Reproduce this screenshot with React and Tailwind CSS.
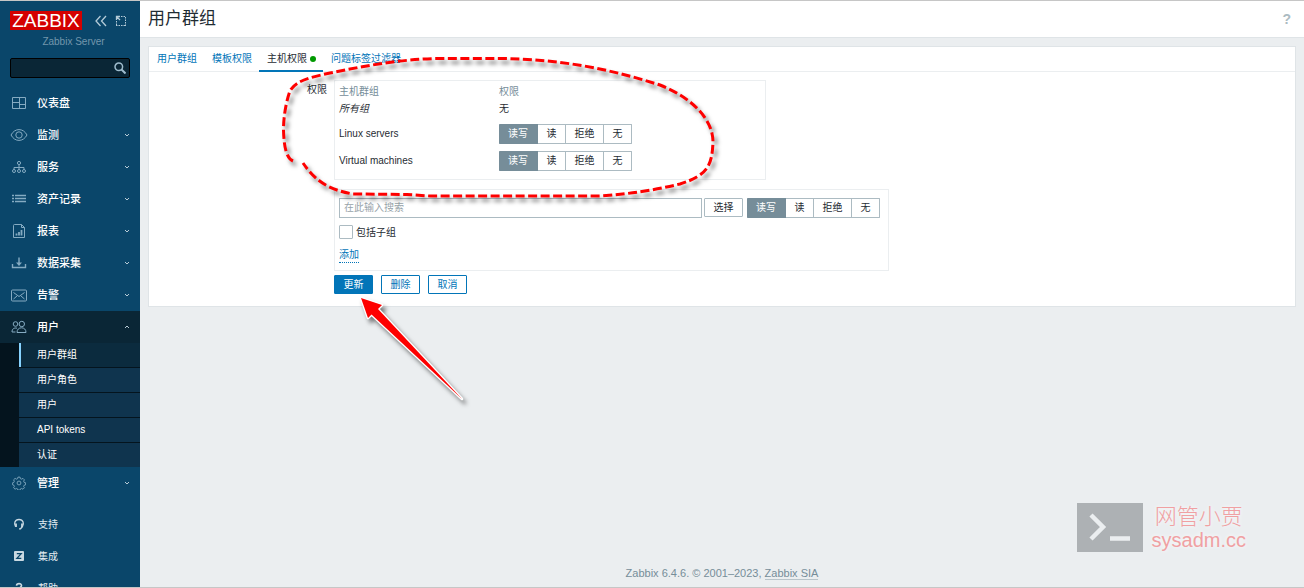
import React from "react";

const stroke = { fill: "none", stroke: "currentColor", strokeWidth: 1 };

function DashboardIcon() {
  return (
    <svg width="16" height="16" viewBox="0 0 16 16" {...stroke}>
      <path d="M1.500 2.500h13v11h-13zM8.500 2.500v11M1.500 7.500h7M8.500 9.500h6" />
    </svg>
  );
}
function EyeIcon() {
  return (
    <svg width="18" height="16" viewBox="0 0 18 16" {...stroke}>
      <path d="M1 8c2-3.600 4.800-5.400 8-5.400S15 4.400 17 8c-2 3.600-4.800 5.400-8 5.400S3 11.600 1 8z" />
      <circle cx="9" cy="8" r="3.200" />
    </svg>
  );
}
function ServicesIcon() {
  return (
    <svg width="16" height="16" viewBox="0 0 16 16" {...stroke}>
      <circle cx="8" cy="4" r="1.600" />
      <circle cx="3" cy="12" r="1.500" />
      <circle cx="8" cy="12" r="1.500" />
      <circle cx="13" cy="12" r="1.500" />
      <path d="M8 5.600v4.900M3 10.500V8.500h10v2" />
    </svg>
  );
}
function ListIcon() {
  return (
    <svg width="16" height="16" viewBox="0 0 16 16" {...stroke}>
      <path d="M1 4.500h2M4 4.500h11M1 7.500h2M4 7.500h11M1 10.500h2M4 10.500h11" strokeWidth="1.300" />
    </svg>
  );
}
function ReportIcon() {
  return (
    <svg width="16" height="16" viewBox="0 0 16 16" {...stroke}>
      <path d="M3.500 1.500h7l3 3v10h-11v-12a1 1 0 0 1 1-1zM10.500 1.500v3h3" />
      <path d="M5.500 12.500v-2M8 12.500V9M10.500 12.500V7" strokeWidth="1.800" />
    </svg>
  );
}
function DownloadIcon() {
  return (
    <svg width="16" height="16" viewBox="0 0 16 16" {...stroke} strokeWidth="1.400">
      <path d="M8 2.500v7M1.500 9v3.500h13V9" />
      <path d="M5 7.500h6L8 11z" fill="currentColor" stroke="none" />
    </svg>
  );
}
function MailIcon() {
  return (
    <svg width="16" height="16" viewBox="0 0 16 16" {...stroke}>
      <rect x="0.500" y="3" width="15" height="11" rx="1" />
      <path d="M2.500 5.500L8 9.500l5.500-4M2.500 12l3.500-3M13.500 12L10 9" />
    </svg>
  );
}
function UsersIcon() {
  return (
    <svg width="16" height="16" viewBox="0 0 16 16" {...stroke}>
      <circle cx="4.500" cy="5" r="2.300" />
      <circle cx="10.800" cy="5" r="2.700" />
      <path d="M6 13.500c0-3 1.800-4.700 4.500-4.700s4.500 1.700 4.500 4.700zM6 9.200c-3-.8-5 .8-5 3.800h3.500" />
    </svg>
  );
}
function GearIcon() {
  return (
    <svg width="14" height="14" viewBox="0 0 16 16" {...stroke}>
      <circle cx="8" cy="8" r="2.200" />
      <path d="M6.800 1.300h2.400l.4 1.700 1.400.6 1.500-.9 1.700 1.700-.9 1.500.6 1.400 1.600.4v2.400l-1.600.4-.6 1.400.9 1.500-1.700 1.700-1.500-.9-1.400.6-.4 1.400H6.800l-.4-1.400-1.400-.6-1.500.9-1.700-1.700.9-1.500-.6-1.400-1.400-.4V7.700l1.400-.4.600-1.400-.9-1.500 1.700-1.700 1.500.9 1.400-.6z" />
    </svg>
  );
}
function HeadsetIcon() {
  return (
    <svg width="12" height="12" viewBox="0 0 12 12" fill="none" stroke="currentColor" strokeWidth="1.300">
      <path d="M2.500 8.500C.8 6 1.500 1.500 6 1.500s5.200 4.500 3.500 7L7.500 10.800H6" />
      <path d="M3 5.500v3.500M9 5.500v3.500" strokeWidth="1.800" />
    </svg>
  );
}
function IntegrationIcon() {
  return (
    <svg width="12" height="12" viewBox="0 0 12 12">
      <rect x="1" y="1" width="10" height="10" rx="1" fill="currentColor" />
      <path d="M3.800 3.600h4.400L3.900 8.400h4.400" fill="none" stroke="#0a466a" strokeWidth="1.300" />
    </svg>
  );
}
function HelpIcon() {
  return (
    <svg width="12" height="12" viewBox="0 0 12 12" fill="none" stroke="currentColor" strokeWidth="1.600">
      <path d="M3.500 3.600C3.700 1 8.600 1 8.500 3.600 8.400 5.400 6 5.300 6 7.500M6 9v1.800" />
    </svg>
  );
}
function Chevron({ up }) {
  return (
    <svg className="ml-auto" width="6" height="6" viewBox="0 0 6 6" fill="none" stroke="#b9ccd7" strokeWidth="1">
      <path d={up ? "M1 4l2-2 2 2" : "M1 2l2 2 2-2"} />
    </svg>
  );
}

const menu = [
  ["仪表盘", DashboardIcon, false],
  ["监测", EyeIcon, true],
  ["服务", ServicesIcon, true],
  ["资产记录", ListIcon, true],
  ["报表", ReportIcon, true],
  ["数据采集", DownloadIcon, true],
  ["告警", MailIcon, true],
];
const submenu = ["用户群组", "用户角色", "用户", "API tokens", "认证"];
const support = [
  ["支持", HeadsetIcon],
  ["集成", IntegrationIcon],
  ["帮助", HelpIcon],
];

function MenuLink({ label, Icon, expandable, open }) {
  return (
    <a
      href="#"
      className={
        "flex h-8 shrink-0 items-center px-[10px] text-[11px] font-medium text-white " + (open ? "bg-[#0a2636]" : "")
      }
    >
      <span className="flex w-[27px] shrink-0">
        <span className="flex w-[18px] justify-center text-[#85abc2]">
          <Icon />
        </span>
      </span>
      {label}
      {expandable && <Chevron up={open} />}
    </a>
  );
}

function Sidebar() {
  return (
    <aside className="flex w-[140px] shrink-0 flex-col overflow-hidden bg-[#0a466a]">
      <div className="flex shrink-0 items-center px-[10px] pt-[10px]">
        <a href="#" className="flex h-[19px] w-[72px] items-center justify-center bg-[#d40000] text-[19px] leading-none text-white">
          ZABBIX
        </a>
        <button type="button" aria-label="收起侧边栏" className="ml-3 text-[#b4cbd8]">
          <svg width="14" height="12" viewBox="0 0 14 12" fill="none" stroke="currentColor" strokeWidth="1.300">
            <path d="M6.500 1L2 6l4.500 5M12 1L7.500 6l4.500 5" />
          </svg>
        </button>
        <button type="button" aria-label="隐藏侧边栏" className="ml-[7px] text-[#b4cbd8]">
          <svg width="12" height="12" viewBox="0 0 12 12" fill="none" stroke="currentColor">
            <path d="M6 1.500h5M10.500 2v9M1.500 6v5M1 10.500h10" strokeDasharray="1.500 1" />
            <path d="M1.500 5V1.500H5M1.500 1.500L5 5" strokeWidth="1.300" />
          </svg>
        </button>
      </div>
      <div className="mt-1 shrink-0 pl-[7px] text-center text-[10px] leading-4 text-[#7396ac]">Zabbix Server</div>
      <label className="mx-[10px] mt-2 flex h-5 shrink-0 items-center rounded-[2px] border border-black bg-[#0a2636]">
        <input type="text" aria-label="搜索" className="min-w-0 flex-1 bg-transparent px-1 text-[10px] text-white outline-none" />
        <svg className="mr-[3px]" width="12" height="12" viewBox="0 0 12 12" fill="none" stroke="#9fbccd" strokeWidth="1.500">
          <circle cx="4.800" cy="4.800" r="3.800" />
          <path d="M7.500 7.500l4 4" strokeWidth="2" />
        </svg>
      </label>
      <nav className="mt-[9px] flex shrink-0 flex-col">
        {menu.map(([label, Icon, expandable]) => (
          <MenuLink key={label} label={label} Icon={Icon} expandable={expandable} />
        ))}
        <MenuLink label="用户" Icon={UsersIcon} expandable open />
        <div className="divide-y divide-[#04141e] bg-[#0f344e]">
          {submenu.map((label, i) => (
            <div key={label} className="flex">
              <span className="w-[19px] bg-[#04141e]" />
              <a
                href="#"
                className={
                  "flex h-6 flex-1 items-center border-l-2 pb-px pl-4 text-[10px] text-white " +
                  (i === 0 ? "border-[#87d3ff] bg-[#0b2b3e]" : "border-[#0f344e]")
                }
              >
                {label}
              </a>
            </div>
          ))}
        </div>
        <MenuLink label="管理" Icon={GearIcon} expandable />
      </nav>
      <nav className="mt-[9px] flex shrink-0 flex-col">
        {support.map(([label, Icon]) => (
          <a key={label} href="#" className="flex h-8 items-center pl-[13px] text-[10px] text-[#e3edf2]">
            <span className="w-[25px] text-[#c9d9e2]">
              <Icon />
            </span>
            {label}
          </a>
        ))}
      </nav>
    </aside>
  );
}

const levels = [
  ["读写", "w-[39px]"],
  ["读", "w-[28px]"],
  ["拒绝", "w-[38px]"],
  ["无", "w-[28px]"],
];

function AccessLevel({ name, label }) {
  return (
    <fieldset aria-label={label} className="flex h-5">
      {levels.map(([text, width], i) => (
        <label
          key={text}
          className={
            "relative flex items-center justify-center border-y border-r border-[#acbbc2] bg-white pb-px text-[#1f2c33] first:rounded-l-[1px] last:rounded-r-[1px] has-checked:border-[#768d99] has-checked:bg-[#768d99] has-checked:text-white " +
            width
          }
        >
          <input type="radio" name={name} defaultChecked={i === 0} className="sr-only" />
          {text}
        </label>
      ))}
    </fieldset>
  );
}

function HostPermissions() {
  return (
    <form className="flex pt-2 pb-3" onSubmit={(e) => e.preventDefault()}>
      <div className="w-[178px] shrink-0 pt-[2px] text-right leading-4">权限</div>
      <div className="ml-[7px] flex min-w-0 flex-col items-start">
        <div className="w-[432px] border border-[#ebeef0] px-1 pt-[2px] pb-[5px]">
          <table className="border-collapse">
            <thead>
              <tr className="h-[17px] text-left text-[#768d99]">
                <th className="w-[160px] p-0 font-normal">主机群组</th>
                <th className="p-0 font-normal">权限</th>
              </tr>
            </thead>
            <tbody>
              <tr className="h-5 align-top leading-[18px]">
                <td className="p-0 italic">所有组</td>
                <td className="p-0">无</td>
              </tr>
              {["Linux servers", "Virtual machines"].map((group) => (
                <tr key={group} className="h-[27px]">
                  <td className="p-0">{group}</td>
                  <td className="p-0">
                    <AccessLevel name={group} label={group} />
                  </td>
                </tr>
              ))}
            </tbody>
          </table>
        </div>
        <div className="mt-[9px] flex w-[555px] flex-col items-start border border-[#ebeef0] px-1 pt-2 pb-[7px]">
          <div className="flex w-full items-start">
            <input
              type="text"
              aria-label="主机群组"
              placeholder="在此输入搜索"
              className="h-5 w-[363px] border border-[#acbbc2] px-1 pb-[2px] outline-none placeholder:text-[#97a3a9]"
            />
            <button type="button" className="ml-[2px] h-[19px] w-[39px] rounded-[1px] border border-[#acbbc2]">
              选择
            </button>
            <div className="ml-1">
              <AccessLevel name="new-group" label="权限" />
            </div>
          </div>
          <label className="mt-[6px] flex h-4 items-center gap-[3px]">
            <input type="checkbox" className="size-[14px] appearance-none rounded-[1px] border border-[#acbbc2] bg-white" />
            包括子组
          </label>
          <button type="button" className="mt-2 border-b border-dotted border-[#0275b8] leading-[14px] text-[#0275b8]">
            添加
          </button>
        </div>
        <div className="mt-1 flex gap-2">
          <button type="submit" className="h-[19px] w-[39px] rounded-[1px] border border-[#0275b8] bg-[#0275b8] text-white">
            更新
          </button>
          <button type="button" className="h-[19px] w-[39px] rounded-[1px] border border-[#0275b8] text-[#0275b8]">
            删除
          </button>
          <button type="button" className="h-[19px] w-[39px] rounded-[1px] border border-[#0275b8] text-[#0275b8]">
            取消
          </button>
        </div>
      </div>
    </form>
  );
}

function Annotations() {
  return (
    <svg
      className="pointer-events-none absolute top-0 left-0 drop-shadow-[3px_4px_2px_rgba(0,0,0,0.5)]"
      width="760"
      height="420"
      viewBox="0 1 760 420"
      aria-hidden="true"
    >
      <path
        d="M293 161C286 158 284 146 283.500 130C283.500 112 288 96 290 91C296 80 312 77 330 73C365 66 400 59 440 58.500L500 58.500C560 59 610 69 660 85C690 97 713 118 713 142C712 164 709 175 680 184C655 190 630 194 600 196L430 196L407 194.500L353 194C330 190 316 182 303 163"
        fill="none"
        stroke="#fe0000"
        strokeWidth="3"
        strokeDasharray="9 3.500"
      />
      <path
        d="M361 298L382 305 378 309 462 399 371.500 314.500 368 318z"
        fill="#fe0000"
        stroke="#fff"
        strokeWidth="2.600"
        strokeLinejoin="round"
        paintOrder="stroke"
      />
    </svg>
  );
}

function Watermark() {
  return (
    <div className="pointer-events-none absolute right-[58px] bottom-[35px] flex items-center gap-[9px]">
      <svg width="66" height="49" viewBox="0 0 66 49" aria-hidden="true">
        <path d="M0 0h66v49H0z" fill="#adb1b4" />
        <path d="M14 12l12 12-12 12M33 35.500h20" fill="none" stroke="#ebeef0" strokeWidth="4.500" />
      </svg>
      <div className="flex flex-col items-center text-[#f0a0a2] [text-shadow:0_0_4px_#fff]">
        <span className="text-[22px] leading-[25px] font-light">网管小贾</span>
        <span className="text-[20px] leading-[22px]">sysadm.cc</span>
      </div>
    </div>
  );
}

const tabs = ["用户群组", "模板权限", "主机权限", "问题标签过滤器"];

export default function App() {
  return (
    <div className="relative flex h-screen overflow-hidden border-y border-[#c6c6c6] bg-[#ebeef0] font-['Liberation_Sans','Noto_Sans_CJK_SC',sans-serif] text-[10px] text-[#1f2c33]">
      <Sidebar />
      <main className="flex min-w-0 flex-1 flex-col">
        <header className="flex h-[37px] shrink-0 items-center justify-between border-b border-[#dfe4e7] bg-white pr-[13px] pl-2">
          <h1 className="text-[17px] leading-6">用户群组</h1>
          <a href="#" aria-label="帮助" className="text-[14px] font-bold text-[#acbbc2]">
            ?
          </a>
        </header>
        <section className="mx-2 mt-2 border border-[#dfe4e7] bg-white">
          <div role="tablist" className="flex h-[25px] border-b border-[#ebeef0]">
            {tabs.map((tab, i) => (
              <button
                key={tab}
                type="button"
                role="tab"
                aria-selected={i === 2}
                className={
                  "flex h-[25px] items-center border-b-2 pr-[7px] pl-2 " +
                  (i === 2 ? "border-[#0275b8]" : "border-transparent text-[#0275b8]")
                }
              >
                {tab}
                {i === 2 && <span className="ml-[3px] size-[6px] rounded-full bg-[#009900]" />}
              </button>
            ))}
          </div>
          <HostPermissions />
        </section>
        <footer className="mt-auto pb-[6px] text-center text-[11px] leading-4 text-[#768d99]">
          Zabbix 6.4.6. © 2001–2023,{" "}
          <a href="#" className="border-b border-[#b9c4ca]">
            Zabbix SIA
          </a>
        </footer>
      </main>
      <Annotations />
      <Watermark />
    </div>
  );
}
